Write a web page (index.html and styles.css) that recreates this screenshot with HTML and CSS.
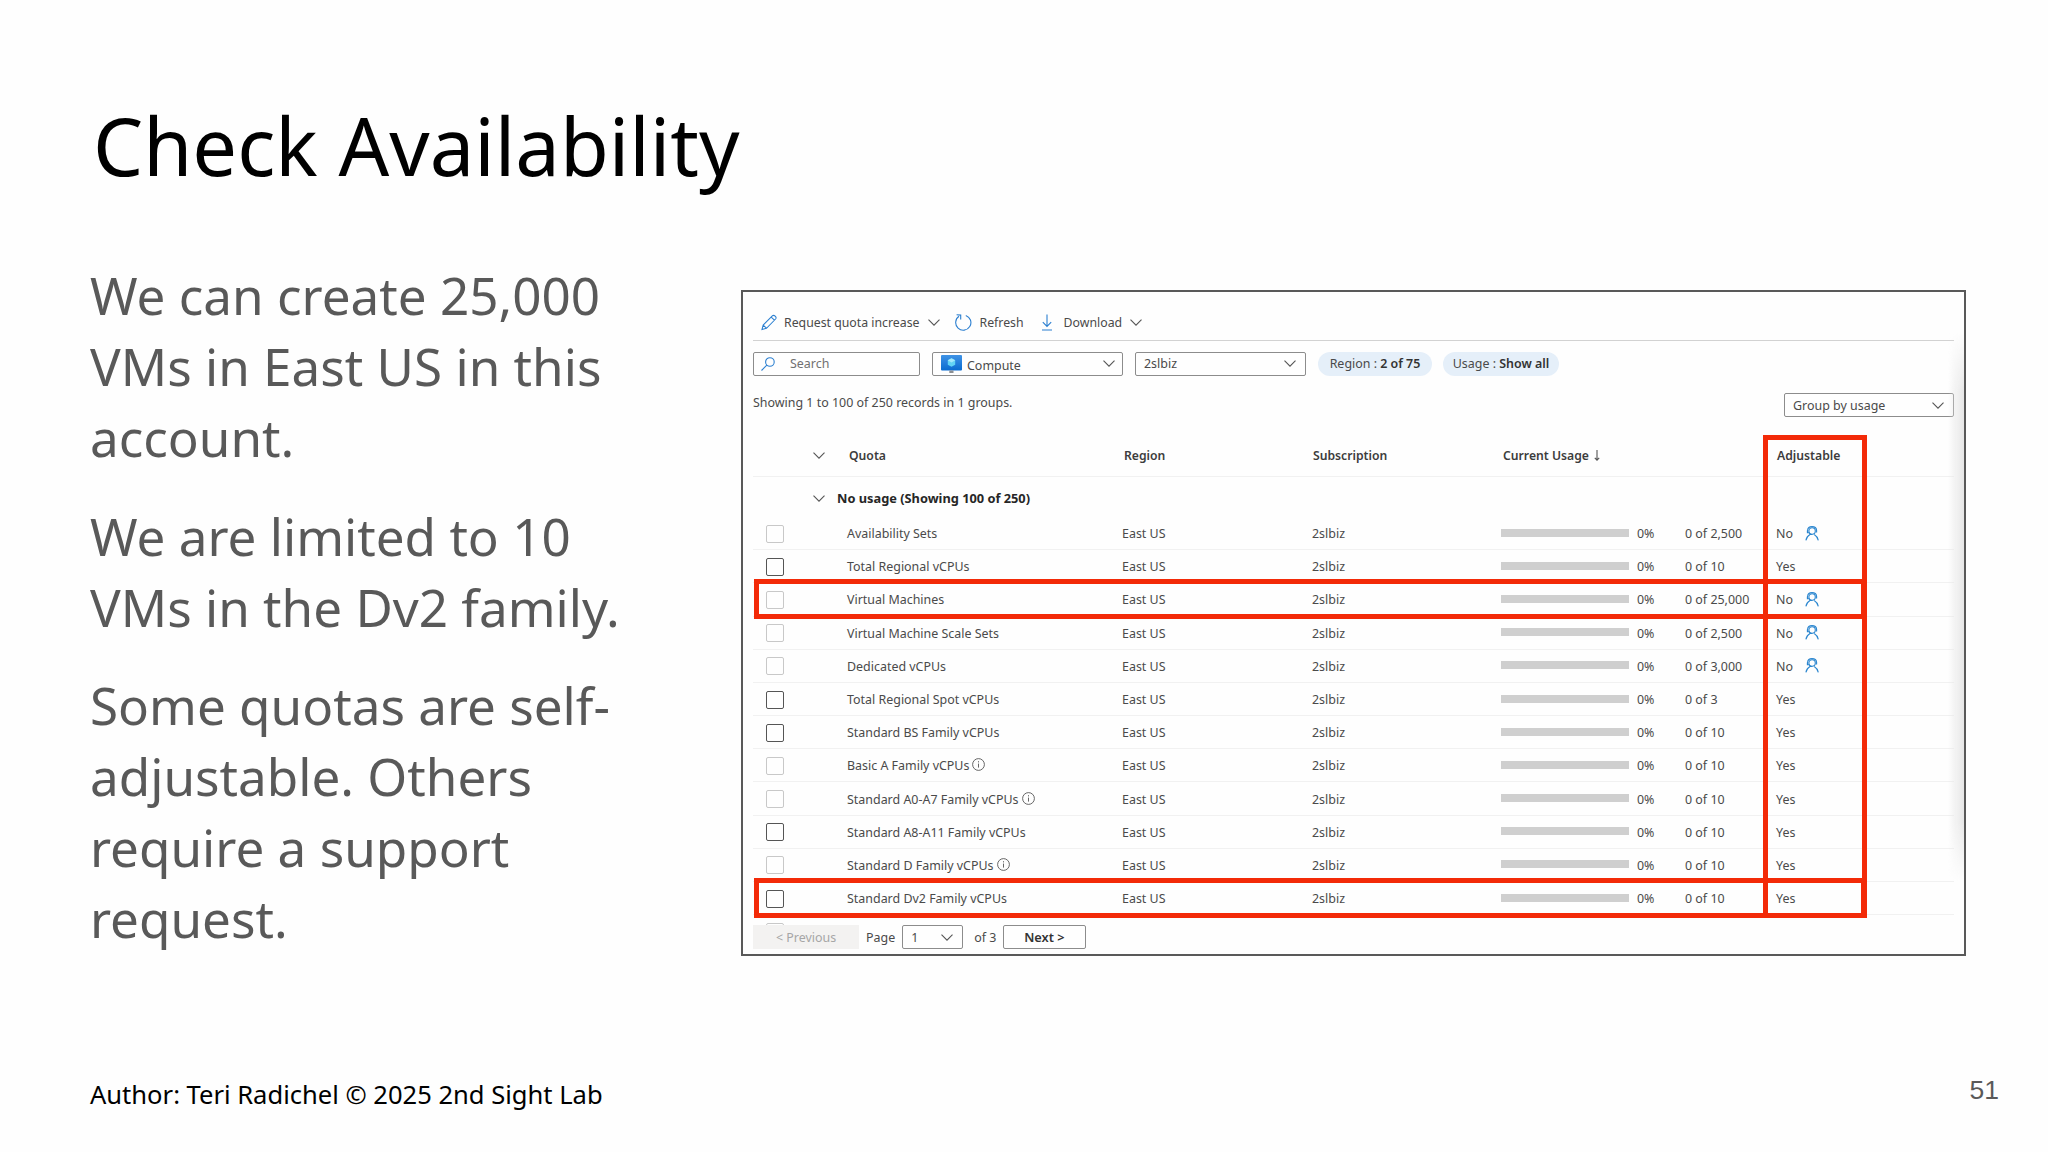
FILE: index.html
```html
<!DOCTYPE html>
<html lang="en"><head>
    <meta charset="utf-8">
    <meta name="viewport" content="width=device-width, initial-scale=1.0">
    <title>Check Availability</title>
    <link rel="stylesheet" href="styles.css">
</head>
<body>
    <svg class="defs" aria-hidden="true">
        <symbol id="chevron" viewBox="0 0 12 7"><path d="M.5.6 6 6.1 11.5.6"/></symbol>
        <symbol id="info" viewBox="0 0 13 13"><circle cx="6.5" cy="6.5" r="5.9"/><path d="M6.5 5.6v4M6.5 3.2v1.2"/></symbol>
        <symbol id="support" viewBox="0 0 14 15"><circle cx="7.1" cy="5" r="3.2"/><path d="M2.600 6.600V4.300C2.800 1.900 4.500.6 7 .6s4.400 1.300 4.600 3.700v2.300M2.400 4.500v2.300h1.800M4 6.600c.5 1.500 1.500 2.200 3.300 1.900M.9 14.400c.5-2.800 2-4.700 4.100-5.900M13.300 14.400c-.6-2.800-2-4.700-4.100-5.900"/></symbol>
    </svg>
    <div class="slide">
        <h1>Check Availability</h1>
        <div class="content">
            <div class="notes">
                <p>We can create 25,000 VMs in East US in this account.</p>
                <p>We are limited to 10 VMs in the Dv2 family.</p>
                <p>Some quotas are self-adjustable. Others require a support request.</p>
            </div>
            <div class="panel">
                <div class="toolbar">
                    <svg class="pencil" viewBox="0 0 17 17"><path d="M1 16l1.300-4.800L12 1.500c1.800-1.800 5.200 1.400 3.500 3.300L5.800 14.600 1 16zM2.300 11.200l3.500 3.400M10.800 2.700l3.500 3.400"/></svg>
                    <span>Request quota increase</span>
                    <svg class="chevron"><use href="#chevron"/></svg>
                    <svg class="refresh" viewBox="0 0 17 17"><path d="M10.800 1.400A7.600 7.600 0 1 1 4 2.300M1.600.8l4.100.3v4.300"/></svg>
                    <span>Refresh</span>
                    <svg class="download" viewBox="0 0 10 17"><path d="M5 .5v11.800M.8 8.200 5 12.400l4.200-4.200M0 16h10"/></svg>
                    <span>Download</span>
                    <svg class="chevron"><use href="#chevron"/></svg>
                </div>
                <div class="filters">
                    <div class="box search">
                        <svg viewBox="0 0 14 14"><circle cx="8.900" cy="5" r="4.300"/><path d="M5.800 8.200.5 13.500"/></svg>
                        <span>Search</span>
                    </div>
                    <div class="box compute">
                        <svg class="monitor" viewBox="0 0 21 18">
                            <defs><linearGradient id="screen" x1="0" y1="0" x2="0" y2="1"><stop offset="0" stop-color="#3f93e6"/><stop offset="1" stop-color="#0a6bd0"/></linearGradient></defs>
                            <rect width="21" height="15.500" rx="1" fill="url(#screen)"/>
                            <path d="M8.300 15.500h4.200v2.500H8.300z" fill="#8b8f93"/>
                            <path d="M10.500 3.200l3.700 2.100v4.400l-3.700 2.100-3.700-2.100V5.300z" fill="#62d3f5"/>
                            <path d="M10.500 3.200l3.700 2.100-3.700 2.100-3.700-2.100z" fill="#a5e8fb"/>
                        </svg>
                        <span>Compute</span>
                        <svg class="chevron"><use href="#chevron"/></svg>
                    </div>
                    <div class="box account">
                        <span>2slbiz</span>
                        <svg class="chevron"><use href="#chevron"/></svg>
                    </div>
                    <div class="pill region">Region : <b>2 of 75</b></div>
                    <div class="pill usage">Usage : <b>Show all</b></div>
                </div>
                <div class="summary">
                    <span>Showing 1 to 100 of 250 records in 1 groups.</span>
                    <div class="box group-by">
                        <span>Group by usage</span>
                        <svg class="chevron"><use href="#chevron"/></svg>
                    </div>
                </div>
                <div class="row head">
                    <span></span>
                    <svg class="chevron"><use href="#chevron"/></svg>
                    <span>Quota</span>
                    <span>Region</span>
                    <span>Subscription</span>
                    <span class="sorted">Current Usage <svg viewBox="0 0 6 11"><path d="M3 0v10M.8 7.800 3 10.200l2.200-2.400"/></svg></span>
                    <span></span>
                    <span></span>
                    <span>Adjustable</span>
                </div>
                <div class="row group">
                    <span></span>
                    <svg class="chevron"><use href="#chevron"/></svg>
                    <b>No usage (Showing 100 of 250)</b>
                </div>
                <div id="rows"></div>
                <div class="next-row"><i class="check off"></i></div>
                <div class="pager">
                    <div class="prev">&lt; Previous</div>
                    <span>Page</span>
                    <div class="box page">
                        <span>1</span>
                        <svg class="chevron"><use href="#chevron"/></svg>
                    </div>
                    <span>of 3</span>
                    <div class="box next">Next &gt;</div>
                </div>
                <div class="edge"></div>
                <div class="mark mark-column"></div>
                <div class="mark mark-vms"></div>
                <div class="mark mark-dv2"></div>
            </div>
        </div>
        <div class="footer">
            <span>Author: Teri Radichel © 2025 2nd Sight Lab</span>
            <span class="number">51</span>
        </div>
    </div>

    <script type="text/javascript">
        // name, limit, adjustable, checkbox enabled, info icon
        const quotas = [
            ['Availability Sets', '2,500', false, false, false],
            ['Total Regional vCPUs', '10', true, true, false],
            ['Virtual Machines', '25,000', false, false, false],
            ['Virtual Machine Scale Sets', '2,500', false, false, false],
            ['Dedicated vCPUs', '3,000', false, false, false],
            ['Total Regional Spot vCPUs', '3', true, true, false],
            ['Standard BS Family vCPUs', '10', true, true, false],
            ['Basic A Family vCPUs', '10', true, false, true],
            ['Standard A0-A7 Family vCPUs', '10', true, false, true],
            ['Standard A8-A11 Family vCPUs', '10', true, true, false],
            ['Standard D Family vCPUs', '10', true, false, true],
            ['Standard Dv2 Family vCPUs', '10', true, true, false]
        ];

        document.getElementById('rows').innerHTML = quotas.map(([name, limit, adjustable, enabled, info]) => `
            <div class="row">
                <i class="check ${enabled ? '' : 'off'}"></i>
                <span></span>
                <span class="name">${name}${info ? '<svg class="info"><use href="#info"/></svg>' : ''}</span>
                <span>East US</span>
                <span>2slbiz</span>
                <i class="bar"></i>
                <span>0%</span>
                <span>0 of ${limit}</span>
                <span class="adjust">${adjustable ? 'Yes' : 'No<svg class="support"><use href="#support"/></svg>'}</span>
            </div>`).join('');
    </script>
</body></html>
```
FILE: styles.css
```css
* {
    box-sizing: border-box;
}

body {
    margin: 0;
    background-color: #fefefe;
    font-family: "Noto Sans", sans-serif;
}

svg {
    display: block;
    flex: none;
    fill: none;
    stroke: #555;
    stroke-width: 1.1;
}

.defs {
    position: absolute;
    width: 0;
    height: 0;
}

.slide {
    display: flex;
    flex-direction: column;
    width: 2048px;
    height: 1152px;
    padding: 95px 49px 0 90px;
    overflow: hidden;
}

h1 {
    margin: 0 0 0 3px;
    font-size: 79.5px;
    font-weight: 400;
    line-height: 100px;
    color: #000;
}

.content {
    display: flex;
    justify-content: space-between;
    margin-top: 65px;
    padding-right: 33px;
    height: 786px;
}

.notes {
    width: 560px;
    font-size: 51.2px;
    line-height: 71px;
    color: #595959;
}

.notes p {
    margin: 0 0 27.7px;
}

.panel {
    position: relative;
    width: 1225px;
    height: 666px;
    margin-top: 30px;
    padding: 0 10px;
    border: 2px solid #595959;
    font-size: 12.45px;
    line-height: 19px;
    color: #4a4a4a;
    white-space: nowrap;
}

.chevron {
    width: 12px;
    height: 7px;
}

.toolbar {
    display: flex;
    align-items: center;
    height: 49px;
    padding: 13px 0 0 8px;
    border-bottom: 1px solid #d2d2d2;
    font-size: 12.3px;
}

.toolbar .pencil {
    width: 16px;
    height: 17px;
    margin-right: 7px;
    stroke: #2b7fd0;
}

.toolbar .chevron {
    margin-left: 8px;
}

.toolbar .refresh {
    width: 17px;
    height: 17px;
    margin: 0 8px 0 15px;
    stroke: #2b7fd0;
}

.toolbar .download {
    width: 10px;
    height: 17px;
    margin: 0 12px 0 18px;
    stroke: #2b7fd0;
}

.filters {
    display: flex;
    align-items: center;
    height: 24px;
    margin-top: 10.5px;
}

.box {
    display: flex;
    align-items: center;
    justify-content: space-between;
    height: 24px;
    padding: 0 9px 0 8px;
    border: 1px solid #8c8c8c;
    border-radius: 2px;
}

.search {
    justify-content: flex-start;
    width: 167px;
    margin-right: 12px;
    padding-left: 7px;
    color: #707070;
}

.search svg {
    width: 14px;
    height: 14px;
    margin-right: 15px;
    stroke: #2b7fd0;
}

.compute {
    width: 191px;
    margin-right: 12px;
    padding-right: 7px;
}

.compute span {
    flex: 1;
    margin: 3px 0 0 5px;
}

.monitor {
    width: 21px;
    height: 18px;
    stroke: none;
}

.account {
    width: 171px;
    margin-right: 12px;
}

.pill {
    height: 24px;
    border-radius: 12px;
    background-color: #e5eff9;
    line-height: 24px;
    text-align: center;
}

.pill b {
    font-weight: 600;
    color: #333;
}

.region {
    width: 114px;
    margin-right: 11px;
}

.usage {
    width: 116px;
}

.summary {
    display: flex;
    justify-content: space-between;
    margin-top: 17.5px;
}

.group-by {
    width: 170px;
}

.row {
    display: grid;
    grid-template-columns: 60px 34px 275px 190px 189px 136px 48px 91px 1fr;
    align-items: center;
    height: 33.2px;
    border-bottom: 1px solid #f1f1f1;
}

#rows .row span {
    padding-top: 1px;
}

.head {
    grid-template-columns: 60px 36px 275px 189px 190px 134px 49px 91px 1fr;
    height: 43.7px;
    margin-top: 16.3px;
    padding-top: 1px;
    font-size: 12.2px;
    font-weight: 600;
    color: #3c3c3c;
}

.sorted {
    display: flex;
    align-items: center;
}

.sorted svg {
    width: 6px;
    height: 11px;
    margin-left: 5px;
}

.group {
    grid-template-columns: 60px 24px 1fr;
    height: 40px;
    padding-top: 2.5px;
    border: none;
    font-size: 12.8px;
    color: #262626;
}

.check {
    width: 18px;
    height: 18px;
    margin: 1px 0 0 13px;
    border: 1px solid #555;
    border-radius: 2px;
}

.check.off {
    border-color: #c8c8c8;
}

.name,
.adjust {
    display: flex;
    align-items: center;
}

.info {
    width: 13px;
    height: 13px;
    margin: 0 0 2px 3px;
    stroke-width: .9;
}

.bar {
    width: 128px;
    height: 8px;
    margin-bottom: 1px;
    background-color: #cfcfcf;
}

.support {
    width: 14px;
    height: 15px;
    margin: 0 0 1px 12px;
    stroke: #2b86cf;
}

/* top edge of the row that scrolls under the pager */
.next-row {
    height: 10px;
    padding-top: 7px;
    overflow: hidden;
}

.next-row .check {
    display: block;
}

.pager {
    display: flex;
    align-items: center;
    height: 24px;
}

.prev {
    width: 106px;
    height: 24px;
    background-color: #f3f2f1;
    color: #a6a6a6;
    line-height: 25px;
    text-align: center;
}

.pager > span {
    margin: 0 7px;
}

.pager .page {
    width: 61px;
    margin-right: 4px;
}

.next {
    justify-content: center;
    width: 83px;
    font-size: 12.8px;
    font-weight: 600;
    color: #333;
}

/* soft shade along the right border */
.edge {
    position: absolute;
    top: 40px;
    right: 0;
    width: 16px;
    height: 550px;
    background: linear-gradient(90deg, #fefefe00, #e6e6e6);
    -webkit-mask-image: linear-gradient(transparent, #000 60px, #000 490px, transparent);
    mask-image: linear-gradient(transparent, #000 60px, #000 490px, transparent);
}

.mark {
    position: absolute;
    border: 5px solid #f32a08;
}

.mark-column {
    top: 143px;
    left: 1020px;
    width: 104px;
    height: 483px;
}

.mark-vms,
.mark-dv2 {
    left: 11px;
    width: 1112px;
    height: 40px;
}

.mark-vms {
    top: 287px;
}

.mark-dv2 {
    top: 586px;
}

.footer {
    display: flex;
    justify-content: space-between;
    align-items: center;
    height: 96px;
    font-size: 25.55px;
    color: #000;
}

.number {
    margin-bottom: 8px;
    font-family: "Liberation Sans", sans-serif;
    font-size: 26.5px;
    color: #595959;
}
```
